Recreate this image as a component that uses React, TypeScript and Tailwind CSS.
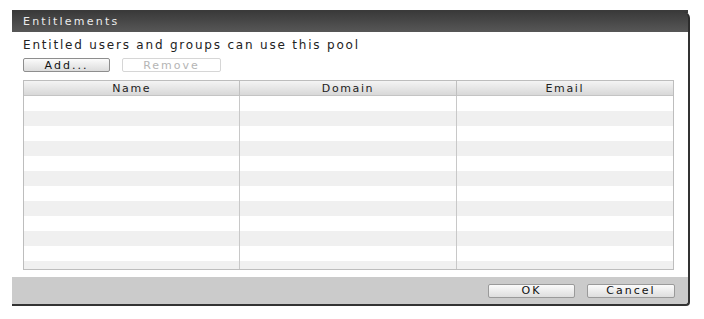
const rows = Array.from({ length: 12 });

const btn =
  "h-[14px] flex items-center justify-center text-[11px] leading-none tracking-[2px] rounded-[2px] border";

export default function App() {
  return (
    <div
      className="w-[704px] h-[319px] bg-white overflow-hidden relative"
      style={{ fontFamily: '"DejaVu Sans", Verdana, sans-serif' }}
    >
      {/* page behind the dialog, cut off */}
      <div className="absolute left-[12px] top-[10px] w-[676px] h-[3px] bg-[#3a3a3a]" />

      <div className="relative ml-[12px] mt-[12px] w-[678px] flex flex-col">
        {/* Title bar */}
        <div className="h-[20px] bg-gradient-to-b from-[#3b3b3b] to-[#575757] rounded-tr-[6px] flex items-center pl-[11px] border-r-2 border-[#2c2c2c]">
          <span className="text-[11px] tracking-[2.2px] text-[#ececec]">Entitlements</span>
        </div>

        {/* Body */}
        <div className="bg-white border-r-2 border-[#333] pl-[11px] pr-[12px] pt-[6px]">
          <div className="text-[12px] tracking-[1.8px] text-[#222] leading-[14px]">
            Entitled users and groups can use this pool
          </div>
          <div className="flex gap-[12px] mt-[6px]">
            <div className={`${btn} w-[87px] border-[#8e8e8e] bg-gradient-to-b from-[#fbfbfb] to-[#dcdcdc] text-[#111]`}>
              Add...
            </div>
            <div className={`${btn} w-[99px] border-[#d6d6d6] bg-white text-[#b5b5b5]`}>
              Remove
            </div>
          </div>

          {/* Table */}
          <div className="mt-[8px] w-[651px] h-[190px] border border-[#bdbdbd] overflow-hidden flex flex-col">
            <div className="h-[15px] shrink-0 grid grid-cols-3 bg-gradient-to-b from-[#f4f4f4] to-[#d8d8d8] border-b border-[#c4c4c4] text-[11px] tracking-[1.6px] text-[#222]">
              <div className="flex items-center justify-center border-r border-[#c0c0c0]">Name</div>
              <div className="flex items-center justify-center border-r border-[#c0c0c0]">Domain</div>
              <div className="flex items-center justify-center">Email</div>
            </div>
            <div className="relative flex-1">
              {rows.map((_, i) => (
                <div key={i} className={`h-[15px] ${i % 2 === 0 ? "bg-white" : "bg-[#f0f0f0]"}`} />
              ))}
              <div className="absolute inset-0 grid grid-cols-3">
                <div className="border-r border-[#c8c8c8]" />
                <div className="border-r border-[#c8c8c8]" />
                <div />
              </div>
            </div>
          </div>
          <div className="h-[7px]" />
        </div>

        {/* Footer */}
        <div className="h-[29px] bg-[#cbcbcb] border-r-2 border-b-2 border-[#333] rounded-br-[4px] flex items-center justify-end gap-[12px] pr-[13px]">
          <div className={`${btn} w-[87px] border-[#9a9a9a] bg-gradient-to-b from-[#fbfbfb] to-[#dedede] text-[#111]`}>OK</div>
          <div className={`${btn} w-[88px] border-[#9a9a9a] bg-gradient-to-b from-[#fbfbfb] to-[#dedede] text-[#111]`}>Cancel</div>
        </div>
      </div>
    </div>
  );
}
